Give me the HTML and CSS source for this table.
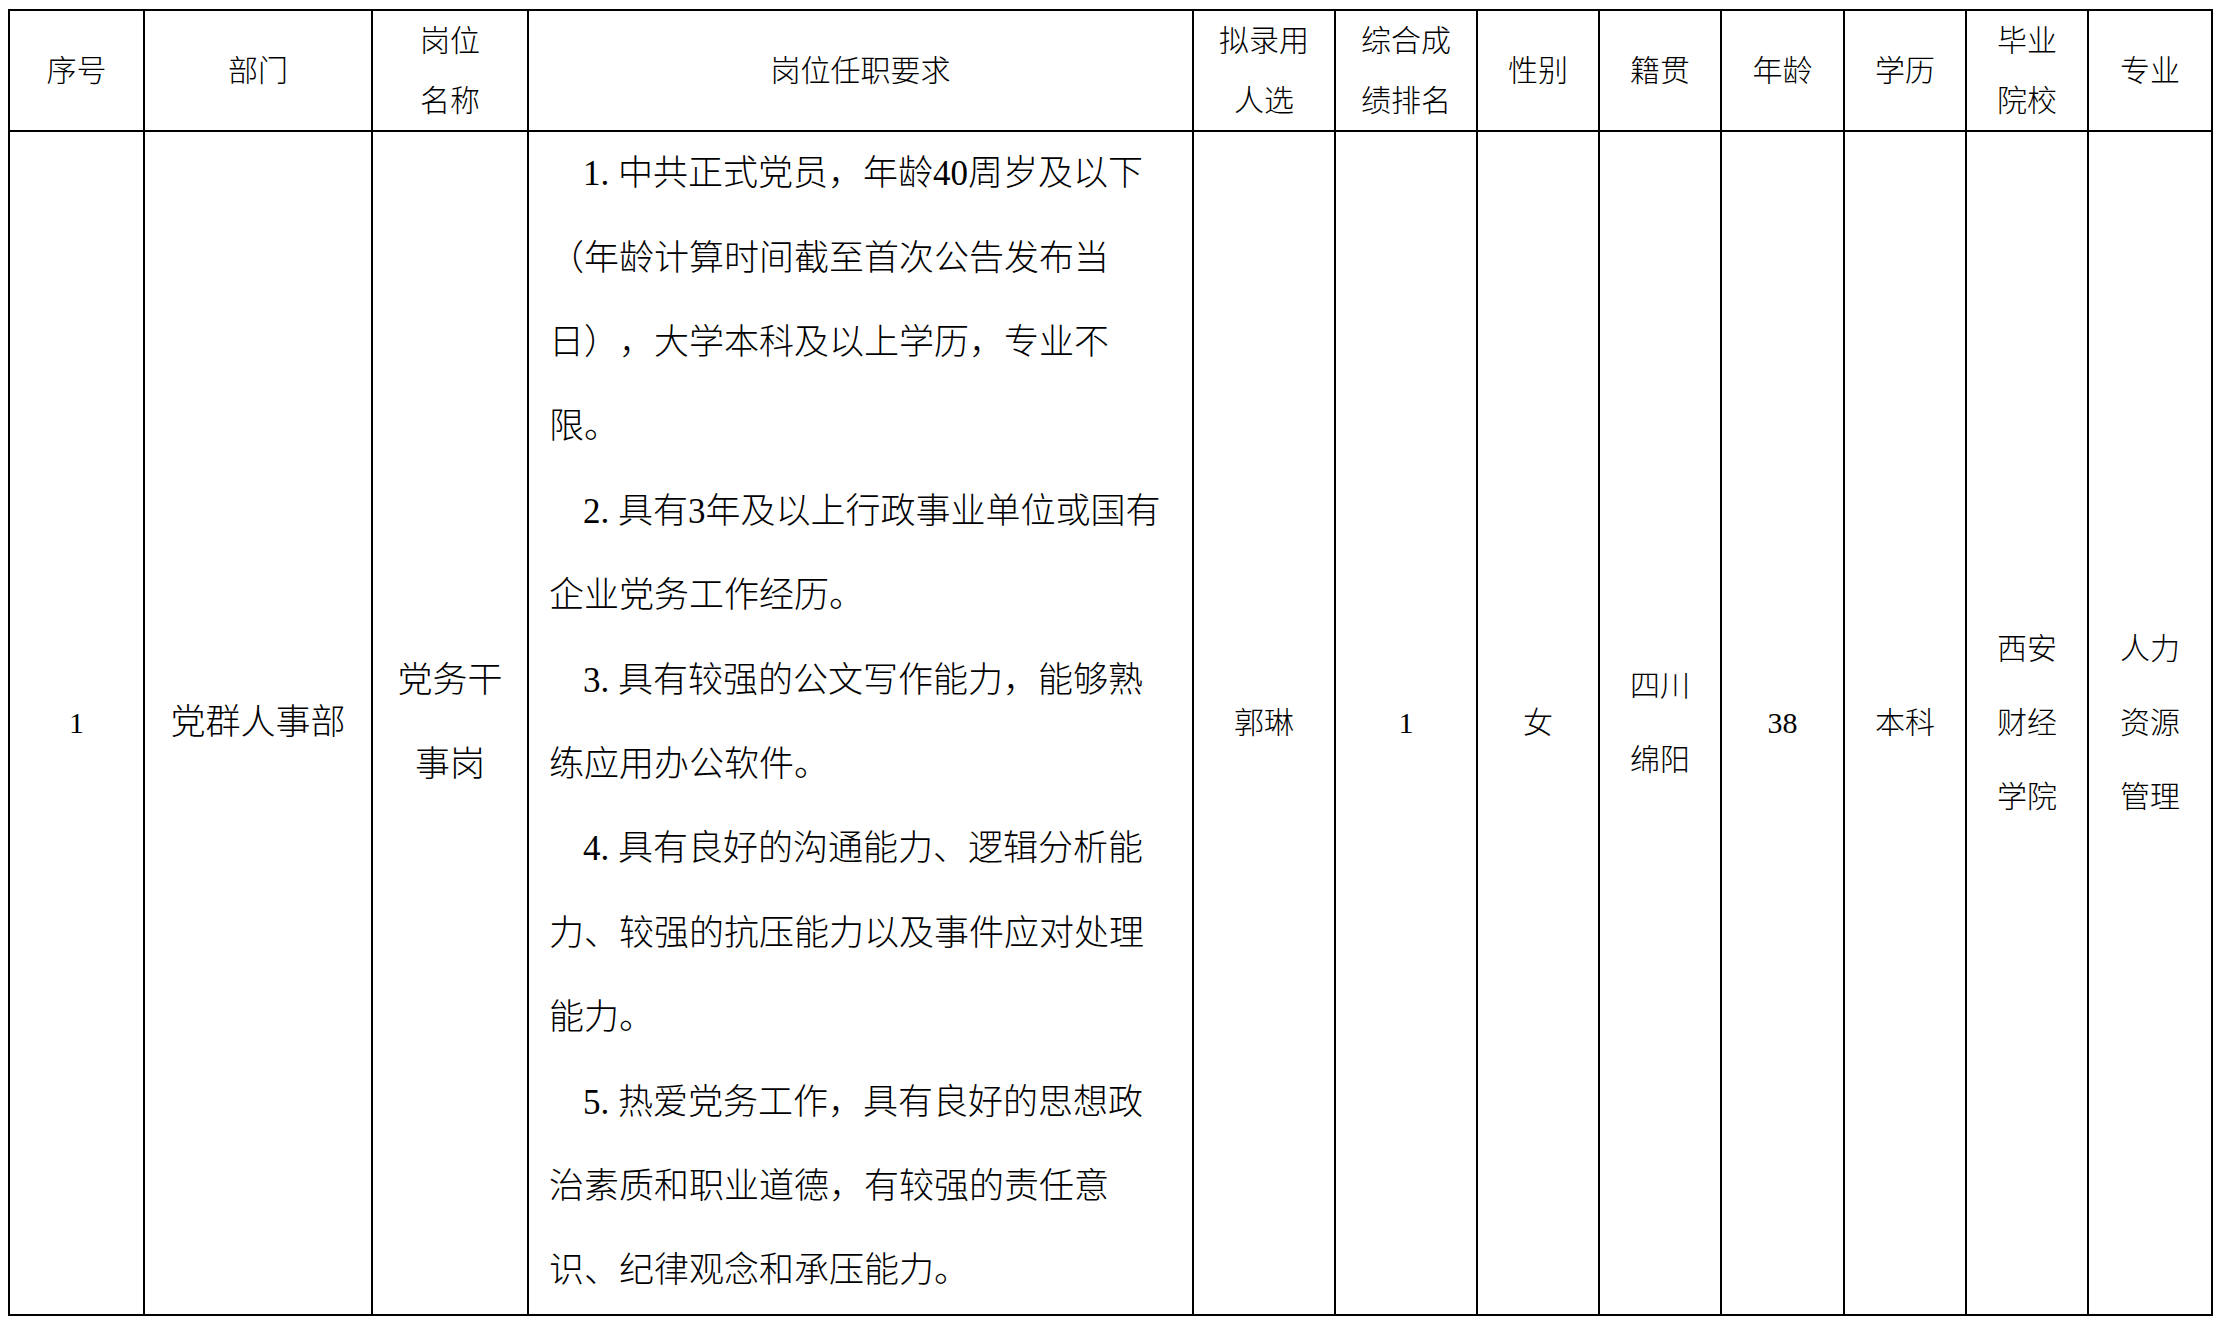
FILE: index.html
```html
<!DOCTYPE html>
<html lang="zh-CN">
<head>
<meta charset="utf-8">
<title>拟录用人员信息表</title>
<link rel="stylesheet" href="styles.css">
</head>
<body>
<div class="sheet" role="table">
  <div class="cell head" role="columnheader">序号</div>
  <div class="cell head" role="columnheader">部门</div>
  <div class="cell head" role="columnheader">岗位<br>名称</div>
  <div class="cell head" role="columnheader">岗位任职要求</div>
  <div class="cell head" role="columnheader">拟录用<br>人选</div>
  <div class="cell head" role="columnheader">综合成<br>绩排名</div>
  <div class="cell head" role="columnheader">性别</div>
  <div class="cell head" role="columnheader">籍贯</div>
  <div class="cell head" role="columnheader">年龄</div>
  <div class="cell head" role="columnheader">学历</div>
  <div class="cell head" role="columnheader">毕业<br>院校</div>
  <div class="cell head" role="columnheader">专业</div>

  <div class="cell sm" role="cell">1</div>
  <div class="cell lg" role="cell">党群人事部</div>
  <div class="cell lg narrow" role="cell">党务干事岗</div>
  <div class="cell req" role="cell">
    <p>1. 中共正式党员，年龄40周岁及以下（年龄计算时间截至首次公告发布当日），大学本科及以上学历，专业不限。</p>
    <p>2. 具有3年及以上行政事业单位或国有企业党务工作经历。</p>
    <p>3. 具有较强的公文写作能力，能够熟练应用办公软件。</p>
    <p>4. 具有良好的沟通能力、逻辑分析能力、较强的抗压能力以及事件应对处理能力。</p>
    <p>5. 热爱党务工作，具有良好的思想政治素质和职业道德，有较强的责任意识、纪律观念和承压能力。</p>
  </div>
  <div class="cell sm" role="cell">郭琳</div>
  <div class="cell sm" role="cell">1</div>
  <div class="cell sm" role="cell">女</div>
  <div class="cell sm" role="cell">四川<br>绵阳</div>
  <div class="cell sm" role="cell">38</div>
  <div class="cell sm" role="cell">本科</div>
  <div class="cell sm" role="cell">西安<br>财经<br>学院</div>
  <div class="cell sm" role="cell">人力<br>资源<br>管理</div>
</div>
</body>
</html>
```

FILE: styles.css
```css
html, body {
  background: #ffffff;
}

body {
  margin: 0;
  padding: 9px 8px;
  color: #000000;
  font-family: "Liberation Serif", "Noto Sans CJK SC", serif;
  font-weight: 300;
}

.sheet {
  display: grid;
  grid-template-columns: 133px 226px 154px 663px 140px 140px 120px 120px 121px 120px 120px 122px;
  grid-template-rows: 119px 1182px;
  gap: 2px;
  padding: 2px;
  background: #000000;
  width: max-content;
}

.cell {
  background: #ffffff;
  display: flex;
  align-items: center;
  justify-content: center;
  text-align: center;
  min-width: 0;
}

.head {
  font-size: 30px;
  line-height: 60px;
}

.sm {
  font-size: 30px;
  line-height: 74px;
}

.lg {
  font-size: 35px;
  line-height: 84px;
}

.narrow {
  padding: 0 10px;
}

.req {
  flex-direction: column;
  align-items: stretch;
  justify-content: center;
  text-align: left;
  padding: 0 25px 0 20px;
  font-size: 35px;
  line-height: 84.4px;
  text-spacing-trim: space-all;
  line-break: strict;
}

.req p {
  margin: 0;
  text-indent: 34px;
}
```
